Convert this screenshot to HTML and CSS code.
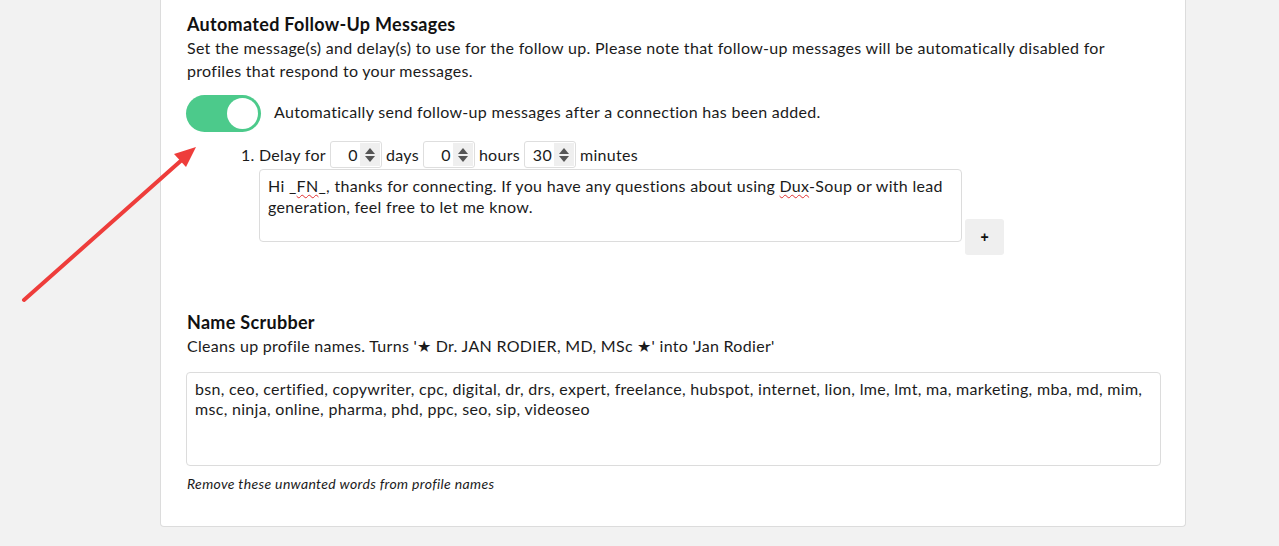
FILE: index.html
```html
<!DOCTYPE html>
<html>
<head>
<meta charset="utf-8">
<link rel="stylesheet" href="styles.css">
</head>
<body>
<div class="card">
  <section class="followup">
    <h3 class="title">Automated Follow-Up Messages</h3>
    <p class="desc">Set the message(s) and delay(s) to use for the follow up. Please note that follow-up messages will be automatically disabled for profiles that respond to your messages.</p>
    <div class="toggle-row">
      <span class="toggle"><span class="knob"></span></span>
      <span class="toggle-label">Automatically send follow-up messages after a connection has been added.</span>
    </div>
    <ol class="steps">
      <li>
        <div class="delay-row">
          <span>Delay for</span>
          <span class="num"><span class="val">0</span><span class="spin"><i class="up"></i><i class="down"></i></span></span>
          <span>days</span>
          <span class="num"><span class="val">0</span><span class="spin"><i class="up"></i><i class="down"></i></span></span>
          <span>hours</span>
          <span class="num"><span class="val">30</span><span class="spin"><i class="up"></i><i class="down"></i></span></span>
          <span>minutes</span>
        </div>
        <div class="msg-row">
          <div class="msg">Hi _<span class="typo">FN</span>_, thanks for connecting. If you have any questions about using <span class="typo">Dux</span>-Soup or with lead generation, feel free to let me know.</div>
          <button class="plus">+</button>
        </div>
      </li>
    </ol>
  </section>
  <section class="scrubber">
    <h3 class="title">Name Scrubber</h3>
    <p class="desc">Cleans up profile names. Turns '★ Dr. JAN RODIER, MD, MSc ★' into 'Jan Rodier'</p>
    <div class="words">bsn, ceo, certified, copywriter, cpc, digital, dr, drs, expert, freelance, hubspot, internet, lion, lme, lmt, ma, marketing, mba, md, mim, msc, ninja, online, pharma, phd, ppc, seo, sip, videoseo</div>
    <p class="hint">Remove these unwanted words from profile names</p>
  </section>
</div>
<svg class="arrow" width="220" height="320" viewBox="0 0 220 320">
  <line x1="24" y1="300" x2="184" y2="158" stroke="#ee3d3b" stroke-width="4" stroke-linecap="round"/>
  <polygon points="196,147 174,154 186,167" fill="#ee3d3b"/>
</svg>
</body>
</html>
```
FILE: styles.css
```css
* { box-sizing: border-box; }
html, body { margin: 0; padding: 0; }
body {
  background: #f2f2f2;
  font-family: "Lato", "Liberation Sans", sans-serif;
  color: #1b1b1b;
  font-size: 16px;
  letter-spacing: 0.3px;
  height: 546px;
  overflow: hidden;
  position: relative;
}
.card {
  margin-left: 160px;
  width: 1026px;
  background: #fff;
  border: 1px solid #dcdcdc;
  border-top: none;
  border-radius: 0 0 4px 4px;
  padding: 13px 24px 33px 25px;
}
.title {
  margin: 0;
  font-size: 18px;
  line-height: 22px;
  font-weight: 700;
  color: #111;
  padding-left: 1px;
  letter-spacing: 0.3px;
}
.desc {
  margin: 1px 0 0;
  line-height: 23px;
  padding-left: 1px;
}
.toggle-row {
  display: flex;
  align-items: center;
  margin-top: 13px;
}
.toggle {
  width: 75px;
  height: 37px;
  border-radius: 19px;
  background: #4cca8b;
  display: flex;
  justify-content: flex-end;
  align-items: center;
  padding-right: 3px;
  flex-shrink: 0;
}
.knob {
  width: 31px;
  height: 31px;
  border-radius: 50%;
  background: #fff;
}
.toggle-label { margin-left: 13px; margin-bottom: 5px; }
.steps {
  margin: 9px 0 0;
  padding-left: 73px;
}
.delay-row {
  display: flex;
  align-items: center;
  gap: 4px;
  height: 27px;
}
.num {
  width: 52px;
  height: 27px;
  border: 1px solid #dedede;
  border-radius: 3px;
  display: flex;
  align-items: center;
  justify-content: flex-end;
  padding: 1px 1px 1px 0;
}
.val { margin-right: 2px; }
.spin {
  width: 20px;
  height: 100%;
  background: #efefef;
  display: flex;
  flex-direction: column;
  align-items: center;
  justify-content: center;
  gap: 2px;
}
.spin i {
  width: 0; height: 0;
  border-left: 5px solid transparent;
  border-right: 5px solid transparent;
}
.spin .up { border-bottom: 6px solid #555; }
.spin .down { border-top: 6px solid #555; }
.msg-row {
  display: flex;
  align-items: flex-start;
  gap: 3px;
  margin-top: 1px;
}
.msg {
  width: 703px;
  height: 73px;
  border: 1px solid #dcdcdc;
  border-radius: 4px;
  padding: 5px 8px;
  line-height: 21px;
}
.typo {
  text-decoration: underline wavy #e03030;
  text-decoration-thickness: 1px;
  text-underline-offset: 2px;
}
.plus {
  margin-top: 50px;
  width: 39px;
  height: 36px;
  border: none;
  border-radius: 3px;
  background: #efefef;
  font-family: "Liberation Sans", sans-serif;
  font-weight: 700;
  font-size: 14px;
  color: #111;
  padding: 0;
  flex-shrink: 0;
}
.scrubber { margin-top: 56px; }
.words {
  margin-top: 15px;
  height: 94px;
  border: 1px solid #dcdcdc;
  border-radius: 4px;
  padding: 6px 8px;
  line-height: 20px;
}
.hint {
  margin: 9px 0 0;
  font-style: italic;
  font-size: 14px;
  line-height: 18px;
  padding-left: 1px;
  letter-spacing: 0.35px;
}
.arrow {
  position: absolute;
  left: 0;
  top: 0;
}
```
